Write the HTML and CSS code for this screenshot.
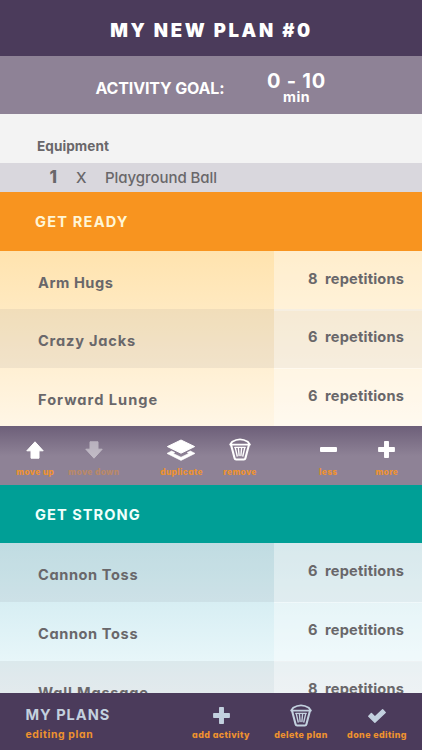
FILE: index.html
```html
<!DOCTYPE html>
<html lang="en">
<head>
<meta charset="utf-8">
<title>My New Plan</title>
<link rel="stylesheet" href="styles.css">
</head>
<body>
<svg class="defs" width="0" height="0">
  <symbol id="trash" viewBox="0 0 22 23">
    <g fill="none" stroke="currentColor" stroke-linejoin="round" stroke-linecap="round">
      <path stroke-width="1.9" d="M1.2 6.6 3.2 3.8Q11-1 18.8 3.8L20.8 6.6Z"/>
      <path stroke-width="2.1" d="M2.1 7 5.6 20.3Q5.9 21.5 7.1 21.5H14.9Q16.1 21.5 16.4 20.3L19.9 7"/>
      <path stroke-width="1.4" d="M5.8 9.4H16.2M6.2 9.4 8.2 18M15.8 9.4 13.8 18M9.4 9.8 10.1 17.6M12.6 9.8 11.9 17.6"/>
    </g>
  </symbol>
  <symbol id="plus" viewBox="0 0 18 18">
    <path fill="currentColor" stroke="currentColor" stroke-linejoin="round" stroke-width="1.6" d="M7.2 .9H10.8V7.2H17.1V10.8H10.8V17.1H7.2V10.8H.9V7.2H7.2Z"/>
  </symbol>
  <symbol id="arrow" viewBox="0 0 18 18">
    <path fill="currentColor" stroke="currentColor" stroke-linejoin="round" d="M9 .8 17.2 9.8H13V17.2H5V9.8H.8Z"/>
  </symbol>
</svg>
<div class="app">
  <header class="title"><h1>MY NEW PLAN #0</h1></header>
  <div class="goal">
    <span class="goal-label">ACTIVITY GOAL:</span>
    <div class="goal-value"><b>0 - 10</b><span>min</span></div>
  </div>
  <div class="equipment">Equipment</div>
  <div class="item"><b>1</b><span class="times">X</span><span class="item-name">Playground Ball</span></div>

  <h2 class="ready-head">GET READY</h2>
  <div class="rows ready">
    <div class="row"><span class="name hugs">Arm Hugs</span><div class="reps"><span>8</span><span>repetitions</span></div></div>
    <div class="row shade"><span class="name jacks">Crazy Jacks</span><div class="reps"><span>6</span><span>repetitions</span></div></div>
    <div class="row"><span class="name lunge">Forward Lunge</span><div class="reps"><span>6</span><span>repetitions</span></div></div>
  </div>

  <div class="toolbar">
    <div class="tool"><svg class="arrow"><use href="#arrow"/></svg><span>move up</span></div>
    <div class="tool off"><svg class="arrow down"><use href="#arrow"/></svg><span>move down</span></div>
    <div class="tool dup"><svg class="layers" viewBox="0 0 30 22"><path fill="currentColor" stroke="currentColor" stroke-linejoin="round" d="M15 1 28.6 7.6 15 14.2 1.4 7.6Z"/><path fill="currentColor" stroke="currentColor" stroke-linejoin="round" stroke-width=".6" d="M5.6 12 1 14.4 15 21.4 29 14.4 24.4 12 21.2 13.6 22.8 14.4 15 18.2 7.2 14.4 8.8 13.6Z"/></svg><span>duplicate</span></div>
    <div class="tool"><svg class="trash"><use href="#trash"/></svg><span>remove</span></div>
    <div class="tool less"><svg class="minus" viewBox="0 0 17 5"><rect width="17" height="5" rx="1" fill="currentColor"/></svg><span>less</span></div>
    <div class="tool"><svg class="plus" viewBox="0 0 17 17"><use href="#plus"/></svg><span>more</span></div>
  </div>

  <h2 class="strong-head">GET STRONG</h2>
  <div class="rows strong">
    <div class="row shade"><span class="name toss">Cannon Toss</span><div class="reps"><span>6</span><span>repetitions</span></div></div>
    <div class="row"><span class="name toss">Cannon Toss</span><div class="reps"><span>6</span><span>repetitions</span></div></div>
    <div class="row shade"><span class="name wall">Wall Massage</span><div class="reps"><span>8</span><span>repetitions</span></div></div>
  </div>

  <footer class="footer">
    <div class="plans"><b>MY PLANS</b><span>editing plan</span></div>
    <div class="action add"><svg class="plus"><use href="#plus"/></svg><span>add activity</span></div>
    <div class="action delete"><svg class="trash"><use href="#trash"/></svg><span>delete plan</span></div>
    <div class="action done"><svg class="check" viewBox="0 0 18 14"><path fill="currentColor" stroke="currentColor" stroke-width="1.4" stroke-linejoin="round" d="M.8 7.2 3.4 4.6 6.9 7.9 14.6 .8 17.2 3.4 6.9 13.2Z"/></svg><span>done editing</span></div>
  </footer>
</div>
</body>
</html>
```
FILE: styles.css
```css
* { box-sizing: border-box; }
body {
  margin: 0;
  font-family: Inter, "Liberation Sans", sans-serif;
  font-feature-settings: "cv11";
  font-weight: 700;
  color: #69676a;
}
.defs { display: block; }
.app {
  width: 422px;
  height: 750px;
  display: grid;
  grid-template-rows: 56px 58.4px 48.6px 29.3px 58.4px 175.6px 58.6px 58.6px 149.5px 57px;
  overflow: hidden;
}
h1, h2 { margin: 0; }
.title {
  background: #4b3b5b;
  display: flex;
  justify-content: center;
  padding: 4px 0 0 1px;
  color: #fff;
}
h1 { font-size: 18.5px; line-height: 52px; font-weight: 900; letter-spacing: 2.65px; white-space: nowrap; }
.goal {
  background: #8e8296;
  color: #fff;
  display: flex;
  align-items: flex-start;
}
.goal-label { margin: 20px 0 0 95.5px; width: 130px; font-size: 16px; line-height: 24px; letter-spacing: -.15px; white-space: nowrap; }
.goal-value { margin: 17px 0 0 40px; width: 62px; display: flex; flex-direction: column; align-items: center; }
.goal-value b { font-size: 20px; line-height: 17px; font-weight: 700; letter-spacing: .75px; white-space: nowrap; }
.goal-value span { font-size: 14.2px; line-height: 14px; letter-spacing: .4px; }
.equipment { background: #f3f3f3; padding: 22px 0 0 37px; font-size: 13.6px; line-height: 20px; letter-spacing: .05px; }
.item {
  background: #d9d7dd;
  display: flex;
  font-size: 15px;
  line-height: 29px;
  font-weight: 450;
}
.item b { margin-left: 49.5px; width: 26.5px; font-size: 17px; font-weight: 800; }
.times { width: 29px; }
.item-name { letter-spacing: -.06px; }
h2 { padding: 2px 0 0 35px; font-size: 14.6px; line-height: 56px; font-weight: 700; }
.ready-head { background: #f8941f; color: #fff6d6; letter-spacing: 1.2px; }
.strong-head { background: #009f96; color: #f0fffc; letter-spacing: 1.05px; }
.rows { display: grid; grid-auto-rows: 58.55px; overflow: hidden; }
.ready { background: linear-gradient(#ffe3ae, #fff6e6); }
.strong { background: linear-gradient(#c9e8ee, #d7eef3 58.5px, #e7f6f9 117px, #f0f8fa); }
.row { display: grid; grid-template-columns: 274px 1fr; font-size: 14.6px; white-space: nowrap; }
.shade { background: rgba(120, 120, 130, .1); }
.name { padding: 4px 0 0 38px; line-height: 56px; }
.hugs { letter-spacing: .55px; }
.jacks { letter-spacing: .8px; }
.lunge { letter-spacing: 1px; }
.toss { letter-spacing: .6px; }
.wall { letter-spacing: .8px; }
.reps {
  display: grid;
  grid-template-columns: 17px 1fr;
  padding-left: 34px;
  line-height: 56px;
  letter-spacing: .2px;
  background: rgba(255, 255, 255, .38);
}
.toolbar {
  display: grid;
  grid-template-columns: repeat(7, 58.6px);
  padding-left: 6px;
  background: linear-gradient(#6d5f79, #8e8296 30px);
  color: #fff;
}
.tool {
  display: grid;
  grid-template-rows: 38px 10px;
  padding-top: 4.5px;
  align-content: start;
  align-items: center;
  justify-items: center;
  font-size: 8.4px;
  line-height: 10px;
  font-weight: 800;
  letter-spacing: .38px;
  white-space: nowrap;
}
.tool span { margin-top: -4px; }
.tool span, .action span { color: #ee922f; }
.off { opacity: .45; }
.dup { margin: 0 -29px 0 29px; }
.tool:nth-child(4) { margin: 0 -29px 0 29px; }
.less { grid-column: 6; }
.arrow { width: 18px; height: 18px; }
.down { transform: rotate(180deg); }
.layers { width: 30px; height: 22px; }
.trash { width: 22px; height: 23px; }
.minus { width: 17px; height: 5px; }
.plus { width: 17px; height: 17px; }
.footer {
  display: grid;
  grid-template-columns: 181px 80px 80px 72px;
  background: #4b3b5b;
  color: #c3d1df;
}
.plans { padding: 12px 0 0 25.5px; display: flex; flex-direction: column; }
.plans b { font-size: 14.6px; line-height: 20px; font-weight: 700; letter-spacing: .98px; }
.plans span { font-size: 10.4px; line-height: 20px; letter-spacing: .65px; color: #ee922f; }
.action {
  display: grid;
  grid-template-rows: 24px 12px;
  padding-top: 11px;
  align-content: start;
  align-items: center;
  justify-items: center;
  font-size: 8.9px;
  line-height: 12px;
  font-weight: 800;
  letter-spacing: .42px;
  white-space: nowrap;
}
.action span { margin-top: 2.5px; }
.action .plus { width: 17px; height: 17px; }
.check { width: 18px; height: 14px; }
```
